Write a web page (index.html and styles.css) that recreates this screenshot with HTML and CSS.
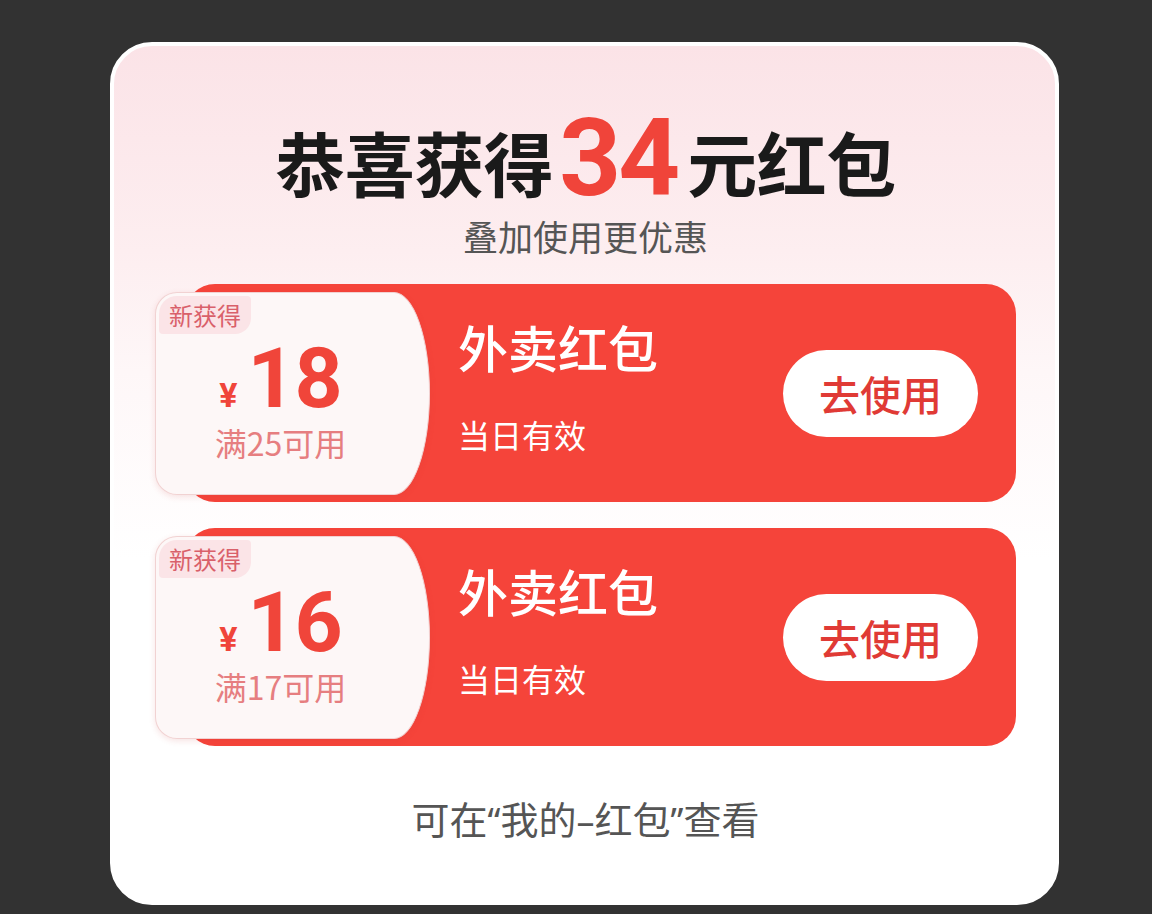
FILE: index.html
```html
<!DOCTYPE html>
<html lang="zh-CN">
<head>
<meta charset="utf-8">
<title>红包</title>
<link rel="stylesheet" href="styles.css">
</head>
<body>
<div class="card">
  <h1 class="title">恭喜获得<span class="amount">34</span>元红包</h1>
  <p class="subtitle">叠加使用更优惠</p>
  <div class="list">
    <div class="coupon">
      <div class="ticket">
        <div class="info">
          <div class="name">外卖红包</div>
          <div class="valid">当日有效</div>
        </div>
        <div class="btn">去使用</div>
      </div>
      <div class="stub">
        <span class="tag">新获得</span>
        <div class="value"><span class="yen">¥</span><span class="num">18</span></div>
        <div class="cond">满25可用</div>
      </div>
    </div>
    <div class="coupon">
      <div class="ticket">
        <div class="info">
          <div class="name">外卖红包</div>
          <div class="valid">当日有效</div>
        </div>
        <div class="btn">去使用</div>
      </div>
      <div class="stub">
        <span class="tag">新获得</span>
        <div class="value"><span class="yen">¥</span><span class="num">16</span></div>
        <div class="cond">满17可用</div>
      </div>
    </div>
  </div>
  <p class="foot">可在<span class="q">“</span>我的<span class="q">–</span>红包<span class="q">”</span>查看</p>
</div>
</body>
</html>
```
FILE: styles.css
```css
html, body {
  margin: 0;
  padding: 0;
  background: #323232;
  height: 914px;
  overflow: hidden;
}
body {
  font-family: "Noto Sans CJK SC", "Noto Sans", sans-serif;
  padding-top: 42px;
  box-sizing: border-box;
}
.card {
  margin-left: 110px;
  width: 949px;
  height: 863px;
  box-sizing: border-box;
  border: 4px solid #ffffff;
  border-radius: 42px;
  background: linear-gradient(180deg, #fbe3e7 0%, #fdeef0 24%, #fef7f8 38%, #ffffff 60%, #ffffff 100%);
  padding: 0 39px 0 41px;
  display: flex;
  flex-direction: column;
  align-items: stretch;
}
.title {
  margin: 0;
  padding-top: 66px;
  height: 100px;
  text-align: center;
  font-size: 70px;
  font-weight: 700;
  color: #1a1a1a;
  line-height: 100px;
  letter-spacing: -0.5px;
}
.amount {
  font-family: Roboto, "Noto Sans", sans-serif;
  font-weight: 700;
  font-size: 108px;
  color: #f0443a;
  letter-spacing: -3px;
  margin: 0 10px 0 6px;
  vertical-align: top;
  line-height: 100px;
  position: relative;
  top: -4px;
}
.subtitle {
  margin: 0;
  text-align: center;
  font-size: 35px;
  line-height: 48px;
  color: #555555;
}
.list {
  margin-top: 24px;
  display: flex;
  flex-direction: column;
  gap: 26px;
}
.coupon {
  display: grid;
  grid-template-columns: 1fr;
  grid-template-rows: 218px;
}
.ticket, .stub {
  grid-area: 1 / 1;
}
.ticket {
  margin-left: 30px;
  background: #f5443a;
  border-radius: 30px;
  display: flex;
  align-items: center;
  justify-content: space-between;
  padding: 0 38px 0 273px;
}
.info {
  display: flex;
  flex-direction: column;
  color: #ffffff;
}
.name {
  font-size: 50px;
  font-weight: 500;
  line-height: 60px;
  margin-top: -14px;
}
.valid {
  font-size: 32px;
  line-height: 44px;
  margin-top: 36px;
}
.btn {
  width: 195px;
  height: 87px;
  border-radius: 44px;
  background: #ffffff;
  color: #e03a35;
  font-size: 41px;
  font-weight: 500;
  display: flex;
  align-items: center;
  justify-content: center;
}
.stub {
  align-self: center;
  justify-self: start;
  width: 275px;
  height: 203px;
  box-sizing: border-box;
  background: #fdf7f7;
  border: 1.5px solid #f1d2d2;
  border-radius: 22px 36px 36px 22px / 22px 50% 50% 22px;
  box-shadow: 0 2px 6px rgba(200, 60, 60, 0.14);
  display: flex;
  flex-direction: column;
  align-items: center;
  padding-right: 24px;
}
.tag {
  align-self: flex-start;
  margin: 3px 0 0 3px;
  padding: 0 10px;
  height: 38px;
  line-height: 38px;
  font-size: 24px;
  color: #d9606a;
  background: #fbe4e7;
  border-radius: 18px 4px 16px 4px;
}
.value {
  display: flex;
  align-items: baseline;
  color: #f0453a;
  height: 70px;
  margin-top: 10px;
  font-family: Roboto, "Noto Sans", sans-serif;
  font-weight: 700;
}
.yen {
  font-size: 34px;
  line-height: 70px;
  margin-right: 10px;
}
.num {
  font-size: 84px;
  letter-spacing: -1px;
  line-height: 70px;
}
.cond {
  font-size: 32px;
  line-height: 40px;
  color: #e67e80;
  margin-top: 8px;
}
.foot {
  margin: 48px 0 0;
  text-align: center;
  font-size: 38px;
  line-height: 48px;
  color: #555555;
}
.q {
  font-family: "Noto Sans", sans-serif;
  font-size: 36px;
}
```
